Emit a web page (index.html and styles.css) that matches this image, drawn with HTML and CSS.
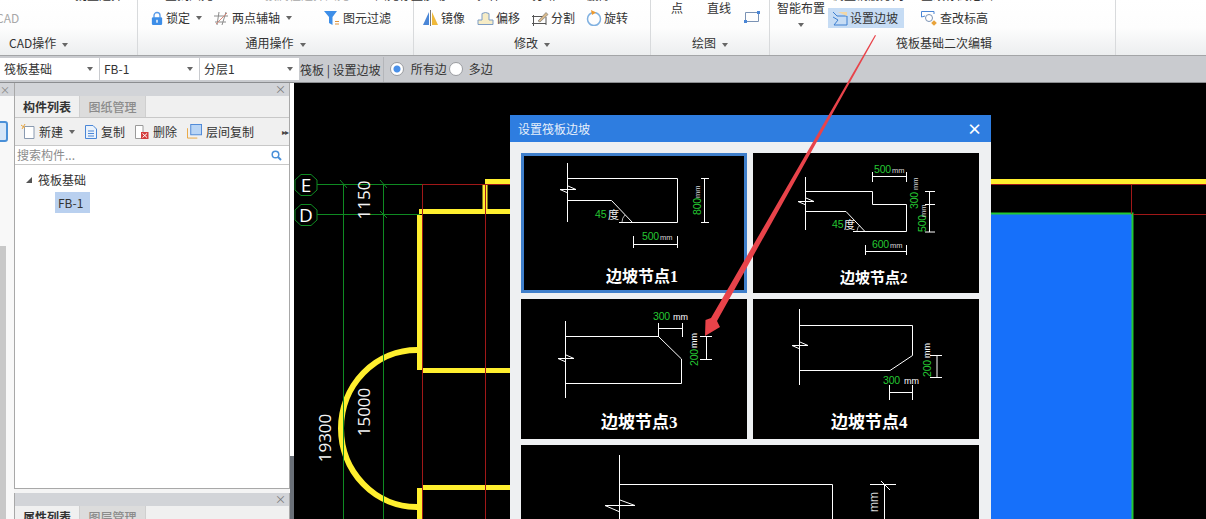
FILE: index.html
```html
<!DOCTYPE html>
<html lang="zh">
<head>
<meta charset="utf-8">
<title>设置筏板边坡</title>
<link rel="stylesheet" href="styles.css">
</head>
<body>
<div class="app">
  <header class="ribbon">
    <section class="group g-cad">
      <div class="g-body">
        <div class="rows">
          <div class="row"><span class="item ml-75">批量选择</span></div>
          <div class="row"><span class="item muted ml-neg">CAD</span></div>
        </div>
      </div>
      <div class="g-label left-9">CAD操作<i class="caret"></i></div>
    </section>

    <section class="group g-common">
      <div class="g-body">
        <div class="rows">
          <div class="row pl-27"><span class="item w-100">查找图元</span><span class="item muted w-110">按属性选择图元</span><span class="item">图元存盘</span></div>
          <div class="row pl-13">
            <span class="item w-63">
              <svg class="ic" width="12" height="15" viewBox="0 0 14 16"><path d="M3.500 7V4.500a3.500 3.500 0 0 1 7 0V7" fill="none" stroke="#5a9be8" stroke-width="1.600"/><rect x="1" y="6.500" width="12" height="9" rx="1.500" fill="#3d8ee8"/><rect x="6.200" y="9.500" width="1.600" height="3.400" fill="#fff"/></svg>
              锁定<i class="caret"></i>
            </span>
            <span class="item w-110">
              <svg class="ic" width="15" height="15" viewBox="0 0 15 15"><path d="M0 5H14M1 11H12M5 1 3 14M12 1 8 14" fill="none" stroke="#8c8c8c"/><path d="M2 13 13 2" stroke="#d98a7a"/></svg>
              两点辅轴<i class="caret"></i>
            </span>
            <span class="item">
              <svg class="ic" width="16" height="16" viewBox="0 0 16 16"><path d="M0 1H13L8.500 7V15L5 13V7Z" fill="#3d8ee8"/><path d="M11 14H15M11 11.500H15" stroke="#e0943a"/></svg>
              图元过滤
            </span>
          </div>
        </div>
      </div>
      <div class="g-label center">通用操作<i class="caret"></i></div>
    </section>

    <section class="group g-modify">
      <div class="g-body">
        <div class="rows">
          <div class="row pl-8"><span class="item w-55">移动</span><span class="item w-55">拉伸</span><span class="item w-55">打断</span><span class="item">删除</span></div>
          <div class="row pl-8">
            <span class="item w-55">
              <svg class="ic" width="17" height="16" viewBox="0 0 17 16"><path d="M7 2V15H1Z" fill="#4a86d6"/><path d="M10 2V15H16Z" fill="#f0b93a"/><path d="M8.500 0V16" stroke="#777"/></svg>
              镜像
            </span>
            <span class="item w-54">
              <svg class="ic" width="17" height="15" viewBox="0 0 17 15"><path d="M1 13.500H16V9H12V2.500Q8.500 .5 5 2.500V9H1Z" fill="#f6ecc6" stroke="#7d9cc4"/></svg>
              偏移
            </span>
            <span class="item w-55">
              <svg class="ic" width="18" height="15" viewBox="0 0 18 15"><path d="M1 5.500H12M1 12.500H15M2.500 4V15M15 6V14" stroke="#555" fill="none"/><path d="M7 10 15 1.500 17 3.500 9 11Z" fill="#d9b98a" stroke="#6a6a6a" stroke-width=".6"/></svg>
              分割
            </span>
            <span class="item">
              <svg class="ic" width="16" height="16" viewBox="0 0 16 16"><circle cx="8" cy="9" r="6.500" fill="none" stroke="#7fb0e0" stroke-width="1.500"/><path d="M5 0 10 2.500 6 5Z" fill="#ef9a2e"/></svg>
              旋转
            </span>
          </div>
        </div>
      </div>
      <div class="g-label center">修改<i class="caret"></i></div>
    </section>

    <section class="group g-draw">
      <div class="g-body draw-body">
        <span class="big w-point">点</span>
        <span class="big w-line">直线</span>
        <span class="draw-rect">
          <svg width="16" height="14" viewBox="0 0 16 14"><path d="M1.500 3.500H14.500V12.500H1.500Z" fill="none" stroke="#7a92b4"/><rect x="0" y="11" width="3" height="3" fill="#4a86d6"/><rect x="13" y="2" width="3" height="3" fill="#4a86d6"/></svg>
        </span>
      </div>
      <div class="g-label center">绘图<i class="caret"></i></div>
    </section>

    <section class="group g-raft">
      <div class="g-body raft-body">
        <div class="smart">智能布置<i class="caret caret-solo"></i></div>
        <div class="rows">
          <div class="row"><span class="item w-93 pl-4">调整钢筋方向</span><span class="item">查改标高范围</span></div>
          <div class="row">
            <span class="item active">
              <svg class="ic" width="16" height="15" viewBox="0 0 16 15"><path d="M1 1 5 5H15M15 5V14H2L6 9 1 6" fill="none" stroke="#3d7fd0"/><path d="M6 1 15 1 15 5Z" fill="#f2d7a6"/></svg>
              设置边坡
            </span>
            <span class="item ml-17">
              <svg class="ic" width="16" height="16" viewBox="0 0 16 16"><path d="M.5 1.500H13V4M.5 1.500V7L4 6" fill="none" stroke="#4a86d6"/><circle cx="8" cy="8" r="3.500" fill="#fff" stroke="#7a92b4"/><rect x="11" y="11" width="4" height="4" transform="rotate(45 13 13)" fill="#e8a33a"/></svg>
              查改标高
            </span>
          </div>
        </div>
      </div>
      <div class="g-label raft-label">筏板基础二次编辑</div>
    </section>
    <section class="group g-rest"></section>
  </header>

  <nav class="bar">
    <div class="combo">筏板基础<i class="caret"></i></div>
    <div class="combo">FB-1<i class="caret"></i></div>
    <div class="combo">分层1<i class="caret"></i></div>
    <span class="crumb">筏板 | 设置边坡</span>
    <i class="radio on"></i><span class="radio-text">所有边</span>
    <i class="radio"></i><span class="radio-text spaced">多边</span>
  </nav>

  <main class="main">
    <aside class="dock">
      <div class="strip">
        <div class="strip-head">×</div>
        <div class="strip-icon"></div>
        <div class="strip-scroll"></div>
      </div>
      <div class="panels">
        <div class="panel panel-top">
          <div class="panel-head"><span class="close">×</span></div>
          <div class="tabs"><span class="tab on">构件列表</span><span class="tab">图纸管理</span></div>
          <div class="tools">
            <span class="tool w-64">
              <svg class="ic" width="14" height="15" viewBox="0 0 14 15"><path d="M3.500 2.500H13V14.500H3.500Z" fill="#fff" stroke="#8a9ab0"/><path d="M0 1 4 4M4 0 1 5" stroke="#e8a33a"/></svg>
              新建<i class="caret"></i>
            </span>
            <span class="tool w-50">
              <svg class="ic" width="12" height="14" viewBox="0 0 12 14"><path d="M.5.5H8L11.500 4V13.500H.5Z" fill="#eaf2fb" stroke="#4a86d6"/><path d="M3 6H9M3 8.500H9M3 11H9" stroke="#4a86d6"/></svg>
              复制
            </span>
            <span class="tool w-52">
              <svg class="ic" width="14" height="14" viewBox="0 0 14 14"><path d="M.5.5H8V13.500H.5Z" fill="#fff" stroke="#9a9a9a"/><rect x="6" y="7" width="7.500" height="7" fill="#d43c3c"/><path d="M7.500 8.500 12 12.500M12 8.500 7.500 12.500" stroke="#fff"/></svg>
              删除
            </span>
            <span class="tool">
              <svg class="ic" width="15" height="15" viewBox="0 0 16 15"><path d="M.5 4V14.500H11" fill="none" stroke="#e8a33a"/><rect x="4" y="0" width="11.500" height="11" fill="#b9d5f5" stroke="#4a86d6"/></svg>
              层间复制
            </span>
            <span class="more">▸▸</span>
          </div>
          <div class="search"><span>搜索构件...</span>
            <svg width="11" height="11" viewBox="0 0 11 11"><circle cx="4.500" cy="4.500" r="3.300" fill="none" stroke="#4a90d8" stroke-width="1.500"/><path d="M7 7 10 10" stroke="#4a90d8" stroke-width="2"/></svg>
          </div>
          <div class="tree">
            <div class="node"><i class="twist"></i>筏板基础</div>
            <div class="leaf">FB-1</div>
          </div>
        </div>
        <div class="panel panel-bottom">
          <div class="panel-head"><span class="close">×</span></div>
          <div class="tabs"><span class="tab on">属性列表</span><span class="tab">图层管理</span></div>
        </div>
      </div>
      <div class="gutter"></div>
    </aside>

    <section class="canvas">
      <svg class="plan" width="912" height="436" viewBox="294 83 912 436">
        <path class="wall" d="M485 181.500H510M991 181.500H1206M485 184V214M419 211.500H510M419.500 215V370M422 370.500H510M422 487.500H510M419.500 488V519"/>
        <path class="wall arc" d="M417 350 A76 78.500 0 0 0 417 507"/>
        <rect class="slab" x="991" y="214" width="141" height="305"/>
        <path class="slab-edge" d="M991 213.500H1132.500V519"/>
        <path class="axis-red" d="M422.500 184V519M422 184.500H1206M485.500 184V519M1131.500 184V214M1133 214.500H1206"/>
        <path class="axis-green" d="M317 184.500H422M317 214.500H420M343.500 184V519M383.500 184V519M340 180 347 188M380 180 387 188M380 211 387 218"/>
        <path class="bubble" d="M301 174.500H311L317 180V190L311 195.500H301L295 190V180Z"/>
        <path class="bubble" d="M301 204.500H311L317 210V220L311 225.500H301L295 220V210Z"/>
        <text class="bubble-text" x="306" y="191.500">E</text>
        <text class="bubble-text" x="306" y="221.500">D</text>
        <text class="dim" transform="translate(370 200) rotate(-90)">1150</text>
        <text class="dim" transform="translate(370 412) rotate(-90)">15000</text>
        <text class="dim" transform="translate(331 438) rotate(-90)">19300</text>
      </svg>

      <div class="dialog">
        <div class="dialog-title"><span>设置筏板边坡</span><span class="dialog-x">×</span></div>
        <div class="cards">
          <div class="card selected">
            <svg class="node-art" width="226" height="140" viewBox="521 153 226 140">
              <path class="ln" d="M567.500 163V222M567 178.500H677.500V222.500H619M567 200.500H611.500L632.500 222.500M560 189.500H576L568 186M560 189.500 568 193"/>
              <path class="ln thin" d="M622 222A10 10 0 0 1 625 215"/>
              <text class="gn" x="595" y="218">45</text><text class="wh" x="608" y="219">度</text>
              <path class="ln" d="M704.500 178V223M701 178.500H709M701 222.500H709M633 244.500H678M633.500 236V248M677.500 236V248"/>
              <text class="gn" x="642" y="240">500</text><text class="mm" x="660" y="240">mm</text>
              <text class="gn" transform="translate(701 215) rotate(-90)">800</text>
              <text class="mm" transform="translate(700 198) rotate(-90)">mm</text>
              <text class="cap" x="606" y="282">边坡节点1</text>
            </svg>
          </div>
          <div class="card">
            <svg class="node-art" width="226" height="140" viewBox="753 153 226 140">
              <path class="ln" d="M805.500 177V230M805 191.500H872.500V204.500H906.500V231.500H853M805 211.500H846L865 231.500M798 201.500H814L806 198M798 201.500 806 205"/>
              <path class="ln thin" d="M857 231A9 9 0 0 1 860 225"/>
              <text class="gn" x="832" y="228">45</text><text class="wh" x="844" y="229">度</text>
              <path class="ln" d="M872 176.500H906M872.500 172V182M906.500 172V182M929.500 191V232M925 191.500H935M925 204.500H935M925 232H935M865 251.500H906M865.500 245V255M906.500 245V255"/>
              <text class="gn" x="874" y="173">500</text><text class="mm" x="892" y="173">mm</text>
              <text class="gn" x="872" y="248">600</text><text class="mm" x="890" y="248">mm</text>
              <text class="gn" transform="translate(918 209) rotate(-90)">300</text>
              <text class="mm" transform="translate(918 190) rotate(-90)">mm</text>
              <text class="gn" transform="translate(926 232) rotate(-90)">500</text>
              <text class="mm" transform="translate(926 217) rotate(-90)">mm</text>
              <text class="cap cap-sm" x="840" y="283">边坡节点2</text>
            </svg>
          </div>
          <div class="card">
            <svg class="node-art" width="226" height="140" viewBox="521 299 226 140">
              <path class="ln" d="M565.500 321V398M565 336.500H658.500L681.500 359V383.500H565M558 358.500H574L566 355M558 358.500 566 362M658 328.500H682M658.500 323V337M682.500 323V337M706.500 336V360M700 336.500H712M700 359.500H712"/>
              <text class="gn" x="653" y="320">300</text><text class="mm lg" x="673" y="320">mm</text>
              <text class="gn" transform="translate(698 366) rotate(-90)">200</text>
              <text class="mm lg" transform="translate(697 348) rotate(-90)">mm</text>
              <text class="cap cap-lg" x="601" y="428">边坡节点3</text>
            </svg>
          </div>
          <div class="card">
            <svg class="node-art" width="226" height="140" viewBox="753 299 226 140">
              <path class="ln" d="M799.500 309V385M799 325.500H912.500V355.500L890 370.500H799M792 345.500H808L800 342M792 345.500 800 349M889 392.500H913M889.500 385V400M912.500 385V400M937 355V378M930 355.500H942M930 377.500H942"/>
              <text class="gn" x="883" y="384">300</text><text class="mm lg" x="904" y="384">mm</text>
              <text class="gn" transform="translate(931 377) rotate(-90)">200</text>
              <text class="mm lg" transform="translate(930 358) rotate(-90)">mm</text>
              <text class="cap cap-lg" x="831" y="428">边坡节点4</text>
            </svg>
          </div>
          <div class="card wide">
            <svg class="node-art" width="458" height="140" viewBox="521 445 458 140">
              <path class="ln" d="M619.500 455V519M619 484.500H832.500V519M605 505.500H635L620 500M605 505.500 620 512M870 484.500H896M884.500 484V519M881 481 890 490"/>
              <text class="mm xl" transform="translate(878 512) rotate(-90)">mm</text>
            </svg>
          </div>
        </div>
      </div>
    </section>
  </main>

  <svg class="pointer" width="1206" height="519" viewBox="0 0 1206 519">
    <path d="M875 35 876 35.500 717 321 720 327 705 336 705.500 320 711 318Z"/>
  </svg>
</div>
</body>
</html>
```

FILE: styles.css
```css
* { box-sizing: border-box; }
html, body { margin: 0; padding: 0; }
body {
  width: 1206px;
  height: 519px;
  overflow: hidden;
  font: 12px/16px "Noto Sans CJK SC", "Liberation Sans", sans-serif;
  color: #333;
  background: #000;
}
.app { position: relative; width: 1206px; height: 519px; overflow: hidden; display: flex; flex-direction: column; }

/* ribbon */
.ribbon {
  display: flex;
  height: 56px;
  flex: none;
  overflow: hidden;
  background: linear-gradient(#fff, #fdfdfd 50%, #eceeef);
  border-bottom: 1px solid #a3a5a7;
}
.group { display: flex; flex-direction: column; justify-content: flex-end; height: 55px; border-right: 1px solid #d8dadc; flex: none; }
.g-cad { width: 138px; }
.g-common { width: 276px; }
.g-modify { width: 237px; }
.g-draw { width: 119px; }
.g-raft { width: 346px; }
.g-rest { flex: 1; border: 0; }
.g-body { height: 31px; flex: none; display: flex; align-items: flex-end; }
.g-label { height: 24px; flex: none; line-height: 24px; }
.center { text-align: center; }
.left-9 { padding-left: 9px; }
.rows { display: flex; flex-direction: column; justify-content: flex-end; margin-bottom: 2px; }
.row { display: flex; align-items: center; height: 22px; flex: none; white-space: nowrap; }
.row + .row { margin-top: 1px; }
.item { display: inline-flex; align-items: center; flex: none; white-space: nowrap; }
.ic { margin-right: 3px; flex: none; }
.g-modify .ic, .active .ic { margin-right: 2px; }
.muted { color: #a8a8a8; }
.pl-27 { padding-left: 27px; }
.pl-13 { padding-left: 13px; }
.pl-8 { padding-left: 8px; }
.pl-4 { padding-left: 4px; }
.ml-75 { margin-left: 75px; }
.ml-neg { margin-left: -4px; }
.ml-17 { margin-left: 17px; }
.w-100 { width: 100px; }
.w-110 { width: 110px; }
.w-63 { width: 63px; }
.w-55 { width: 55px; }
.w-54 { width: 54px; }
.w-93 { width: 93px; }
.caret {
  display: inline-block;
  width: 0;
  height: 0;
  margin-left: 6px;
  border: 3px solid transparent;
  border-top: 4px solid #666;
  border-bottom: 0;
  vertical-align: middle;
}
.draw-body { position: relative; align-items: flex-start; }
.big { flex: none; padding-top: 0; line-height: 16px; }
.w-point { margin-left: 20px; width: 36px; }
.w-line { width: 37px; }
.draw-rect { flex: none; margin-top: 9px; line-height: 0; }
.raft-body { align-items: stretch; padding-left: 7px; }
.smart { width: 51px; flex: none; line-height: 16px; }
.caret-solo { display: block; margin: 7px 0 0 21px; }
.active { background: #c6dcf4; height: 20px; width: 76px; padding-left: 4px; }
.raft-label { padding-left: 126px; }

/* second bar */
.bar {
  display: flex;
  align-items: center;
  height: 27px;
  flex: none;
  background: #c9cbcf;
  border-bottom: 1px solid #8b8d90;
  white-space: nowrap;
}
.combo {
  position: relative;
  width: 99px;
  height: 22px;
  margin-right: 1px;
  padding-left: 4px;
  line-height: 22px;
  background: #fff;
  flex: none;
}
.combo .caret { position: absolute; right: 6px; top: 9px; }
.crumb { padding-right: 2px; border-right: 1px solid #b4b6ba; line-height: 25px; margin-right: 6px; }
.radio {
  width: 14px;
  height: 14px;
  border-radius: 50%;
  background: #fff;
  border: 1px solid #9a9ca0;
  flex: none;
  margin-left: 2px;
}
.radio.on { background: radial-gradient(#4a90e8 0 3px, #fff 4px); margin-left: 0; }
.radio-text { margin-left: 7px; }
.spaced { margin-left: 6px; }

/* main */
.main { display: flex; flex: 1; min-height: 0; }
.dock { display: flex; width: 294px; flex: none; background: #f4f4f4; }
.strip { width: 14px; flex: none; display: flex; flex-direction: column; background: #f8f8f8; overflow: hidden; }
.strip-head { height: 13px; flex: none; background: #d2d4d8; color: #888; font-size: 10px; line-height: 13px; }
.strip-icon { width: 12px; height: 21px; margin: 25px 0 0 -4px; flex: none; border: 2px solid #4a90d8; border-radius: 3px; background: #d5e6f8; }
.strip-scroll { width: 6px; flex: 1; margin-top: 104px; background: #c8c8c8; }
.panels { width: 276px; flex: none; display: flex; flex-direction: column; }
.panel { border: 1px solid #a8a8a8; border-top: 0; flex: none; background: #fff; }
.panel-top { height: 406px; }
.panel-bottom { margin-top: 4px; flex: 1; border-bottom: 0; background: #f0f0f0; }
.panel-head { height: 13px; background: #d2d4d8; text-align: right; padding-right: 3px; color: #777; line-height: 13px; font-size: 11px; }
.close { display: inline-block; }
.tabs { display: flex; height: 22px; background: #f0f0f0; border-bottom: 1px solid #c8c8c8; }
.tab { width: 66px; line-height: 21px; text-align: center; background: #dcdcdc; color: #8b8b8b; font-weight: 500; border-right: 1px solid #cfcfcf; }
.tab.on { width: 65px; background: #f0f0f0; color: #333; font-weight: 700; }
.tools { display: flex; align-items: center; height: 28px; padding-left: 6px; background: #f0f0f0; border-bottom: 1px solid #c8c8c8; }
.tools .ic { margin-right: 4px; }
.tool { display: inline-flex; align-items: center; flex: none; white-space: nowrap; }
.w-64 { width: 64px; }
.w-50 { width: 50px; }
.w-52 { width: 52px; }
.more { margin-left: auto; margin-right: 1px; font-size: 8px; letter-spacing: -1px; color: #444; }
.search { display: flex; align-items: center; justify-content: space-between; height: 19px; padding: 0 7px 0 2px; border-bottom: 1px solid #c8c8c8; color: #8c8c8c; }
.tree { padding: 6px 0 0 11px; }
.node { display: flex; align-items: center; height: 18px; }
.twist { width: 0; height: 0; margin-right: 6px; border-style: solid; border-width: 0 0 6px 6px; border-color: transparent transparent #555 transparent; }
.leaf { width: 35px; height: 21px; margin: 3px 0 0 29px; padding-left: 3px; line-height: 21px; background: #b9d0ef; }
.gutter { width: 4px; flex: none; background: linear-gradient(#fff 373px, #6a7078 373px); }

/* canvas */
.canvas { position: relative; flex: 1; background: #000; overflow: hidden; }
.plan { display: block; }
.wall { fill: none; stroke: #ffef2e; stroke-width: 5; }
.arc { stroke-width: 6; }
.slab { fill: #1670fa; }
.slab-edge { fill: none; stroke: #22c832; stroke-width: 2; }
.axis-red { fill: none; stroke: #a01818; stroke-width: 1; }
.axis-green { fill: none; stroke: #0f8a22; stroke-width: 1; }
.bubble { fill: #000; stroke: #0f8a22; }
.bubble-text { fill: #fff; font: 19px "Open Sans", sans-serif; text-anchor: middle; }
.dim { fill: #f4f4f4; font: 17px "Open Sans", sans-serif; text-anchor: middle; }

/* dialog */
.dialog { position: absolute; left: 216px; top: 32px; width: 481px; height: 404px; background: #eef0f2; overflow: hidden; }
.dialog-title { display: flex; justify-content: space-between; align-items: center; height: 27px; padding: 0 8px; background: #2e7de0; color: #e6effa; }
.dialog-x { font-size: 15px; font-weight: 700; color: #fff; padding-right: 1px; }
.cards { display: grid; grid-template-columns: 226px 226px; grid-auto-rows: 140px; gap: 6px; padding: 11px 0 0 11px; }
.card { position: relative; background: #000; height: 140px; }
.card.wide { grid-column: 1 / 3; }
.selected { outline: 3px solid #3f7fcb; outline-offset: -3px; }
.node-art { display: block; }
.ln { fill: none; stroke: #fff; stroke-width: 1; }
.thin { stroke-width: .7; }
.gn { fill: #25c732; font: 10.500px "Liberation Sans", sans-serif; letter-spacing: -.2px; }
.wh { fill: #f0f0f0; font: 11px "Noto Sans CJK SC", sans-serif; }
.mm { fill: #d8d8d8; font: 7.500px "Liberation Sans", sans-serif; }
.lg { fill: #fff; font-size: 9px; }
.xl { font-size: 12px; }
.cap { fill: #fff; font: 700 16px "Liberation Serif", "Noto Sans CJK SC", serif; }
.cap-sm { font-size: 15px; }
.cap-lg { font-size: 17px; }

/* annotation arrow */
.pointer { position: absolute; left: 0; top: 0; pointer-events: none; }
.pointer path { fill: #e8434a; }
```
